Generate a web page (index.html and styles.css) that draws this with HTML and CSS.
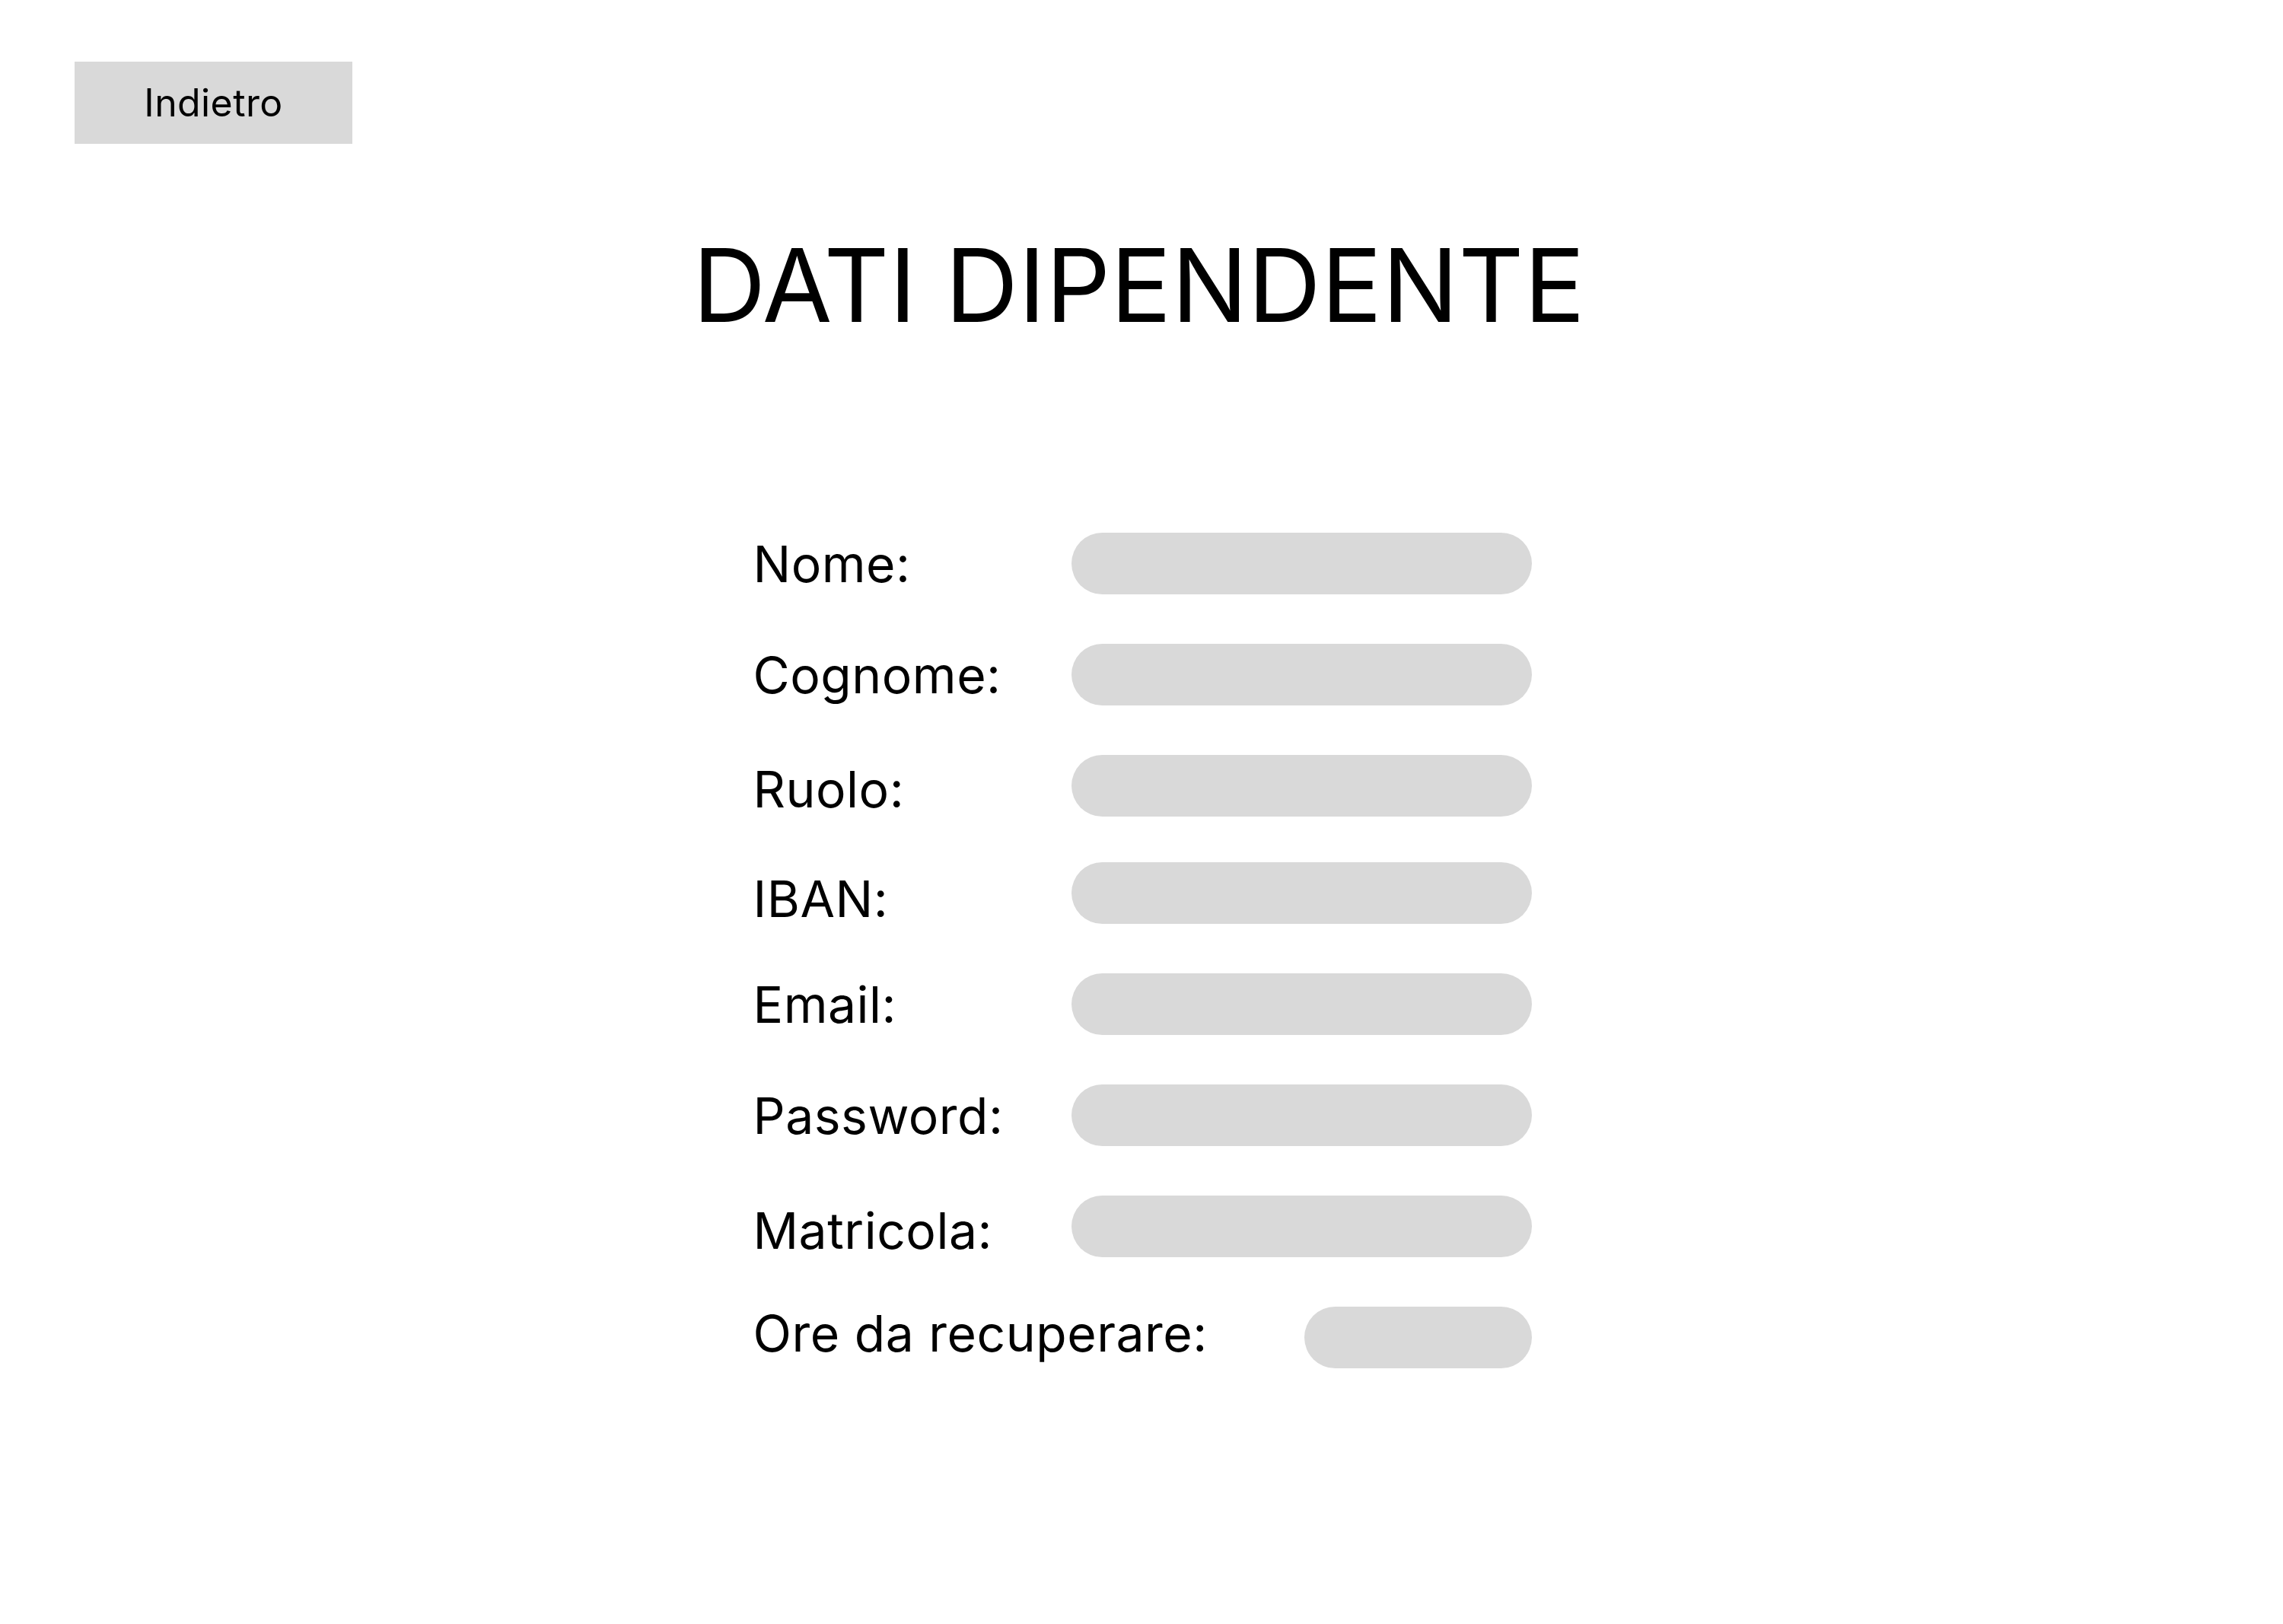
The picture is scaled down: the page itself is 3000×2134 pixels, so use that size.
FILE: index.html
```html
<!DOCTYPE html>
<html lang="it">
<head>
<meta charset="utf-8">
<title>Dati dipendente</title>
<link rel="stylesheet" href="styles.css">
</head>
<body>
<div class="page">
  <div class="topbar">
    <button class="back-btn" type="button">Indietro</button>
  </div>
  <h1 class="title">DATI DIPENDENTE</h1>
  <form class="form">
    <div class="row">
      <span class="label">Nome:</span>
      <span class="field"></span>
    </div>
    <div class="row">
      <span class="label">Cognome:</span>
      <span class="field"></span>
    </div>
    <div class="row">
      <span class="label label-down4">Ruolo:</span>
      <span class="field"></span>
    </div>
    <div class="row row-tight">
      <span class="label label-down7">IBAN:</span>
      <span class="field"></span>
    </div>
    <div class="row">
      <span class="label">Email:</span>
      <span class="field"></span>
    </div>
    <div class="row">
      <span class="label">Password:</span>
      <span class="field"></span>
    </div>
    <div class="row">
      <span class="label label-down5">Matricola:</span>
      <span class="field"></span>
    </div>
    <div class="row">
      <span class="label label-up5">Ore da recuperare:</span>
      <span class="field field-short"></span>
    </div>
  </form>
</div>
</body>
</html>
```

FILE: styles.css
```css
html, body {
  margin: 0;
  padding: 0;
  background: #ffffff;
}

body {
  font-family: Inter, "Noto Sans", "Liberation Sans", sans-serif;
  color: #000000;
}

.page {
  width: 3000px;
  min-height: 2134px;
  display: flex;
  flex-direction: column;
}

.topbar {
  display: flex;
  padding: 81px 0 0 98px;
}

.back-btn {
  width: 365px;
  height: 108px;
  background: #d9d9d9;
  border: none;
  border-radius: 0;
  padding: 0;
  margin: 0;
  font-family: Inter, "Noto Sans", "Liberation Sans", sans-serif;
  font-size: 50px;
  font-weight: 400;
  letter-spacing: 0.4px;
  color: #000000;
  display: flex;
  align-items: center;
  justify-content: center;
}

.title {
  margin: 119px 0 0 0;
  padding-right: 7px;
  text-align: center;
  font-size: 133px;
  font-weight: 400;
  line-height: 1;
  letter-spacing: 0.2px;
}

.form {
  width: 1025px;
  margin: 259px auto 0 auto;
  display: flex;
  flex-direction: column;
  gap: 65px;
}

.row {
  height: 81px;
  display: flex;
  align-items: center;
  justify-content: space-between;
}

.row-tight {
  margin-top: -5px;
}

.label {
  font-size: 66px;
  font-weight: 400;
  line-height: normal;
  letter-spacing: 0.5px;
  padding-left: 2px;
  white-space: nowrap;
}

.label-down4 { margin-top: 8px; }
.label-down5 { margin-top: 10px; }
.label-down7 { margin-top: 14px; }
.label-up5 { margin-bottom: 11px; }

.field {
  width: 605px;
  height: 81px;
  background: #d9d9d9;
  border-radius: 40.5px;
  flex: none;
}

.field-short {
  width: 299px;
}
```
